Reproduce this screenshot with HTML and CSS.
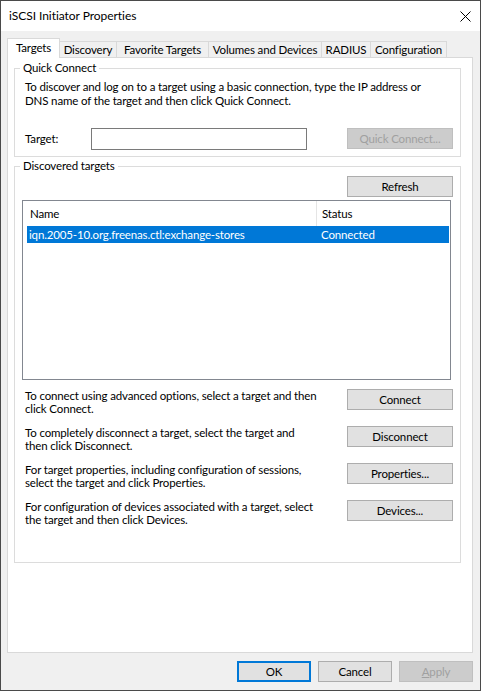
FILE: index.html
```html
<!DOCTYPE html>
<html>
<head>
<meta charset="utf-8">
<link rel="stylesheet" href="styles.css">
</head>
<body>
<div class="window">
  <div class="titlebar">
    <span class="title">iSCSI Initiator Properties</span>
    <svg class="close" width="11" height="11" viewBox="0 0 11 11"><path d="M0.5 0.5 L10.5 10.5 M10.5 0.5 L0.5 10.5" stroke="#000" stroke-width="1" fill="none"/></svg>
  </div>
  <div class="body">
    <div class="tabs">
      <div class="tab sel t1">Targets</div>
      <div class="tab t2">Discovery</div>
      <div class="tab t3">Favorite Targets</div>
      <div class="tab t4">Volumes and Devices</div>
      <div class="tab t5">RADIUS</div>
      <div class="tab t6">Configuration</div>
    </div>
    <div class="panel">
      <fieldset class="group qc">
        <legend>Quick Connect</legend>
        <div class="group-body">
          <p class="desc">To discover and log on to a target using a basic connection, type the IP address or<br>DNS name of the target and then click Quick Connect.</p>
          <div class="target-row">
            <span class="label">Target:</span>
            <div class="input"></div>
            <div class="btn disabled">Quick Connect...</div>
          </div>
        </div>
      </fieldset>
      <fieldset class="group dt">
        <legend>Discovered targets</legend>
        <div class="group-body">
          <div class="refresh-row"><div class="btn">Refresh</div></div>
          <div class="listview">
            <div class="lv-header">
              <div class="hcol name">Name</div>
              <div class="hcol status">Status</div>
            </div>
            <div class="lv-row selected">
              <div class="rcol name">iqn.2005-10.org.freenas.ctl:exchange-stores</div>
              <div class="rcol status">Connected</div>
            </div>
          </div>
          <div class="actions">
            <div class="action">
              <p>To connect using advanced options, select a target and then<br>click Connect.</p>
              <div class="btn">Connect</div>
            </div>
            <div class="action">
              <p>To completely disconnect a target, select the target and<br>then click Disconnect.</p>
              <div class="btn">Disconnect</div>
            </div>
            <div class="action">
              <p>For target properties, including configuration of sessions,<br>select the target and click Properties.</p>
              <div class="btn">Properties...</div>
            </div>
            <div class="action">
              <p>For configuration of devices associated with a target, select<br>the target and then click Devices.</p>
              <div class="btn">Devices...</div>
            </div>
          </div>
        </div>
      </fieldset>
    </div>
    <div class="footer">
      <div class="btn fbtn default">OK</div>
      <div class="btn fbtn">Cancel</div>
      <div class="btn fbtn disabled"><u>A</u>pply</div>
    </div>
  </div>
</div>
</body>
</html>
```
FILE: styles.css
```css
* { box-sizing: border-box; }
html, body { margin: 0; padding: 0; background: #ffffff; }
body {
  font-family: Lato, "Noto Sans", "DejaVu Sans", sans-serif;
  font-size: 11.5px;
  letter-spacing: -0.15px;
  color: #000;
}
.window {
  width: 481px;
  height: 691px;
  border: 1px solid #4a4a4a;
  background: #f0f0f0;
  display: flex;
  flex-direction: column;
}
.titlebar {
  height: 30px;
  background: #ffffff;
  display: flex;
  align-items: center;
  justify-content: space-between;
  padding: 0 9px 0 8px;
  flex: none;
}
.title { font-size: 12px; letter-spacing: -0.05px; line-height: 14px; }
.close { display: block; }
.body {
  flex: 1;
  display: flex;
  flex-direction: column;
  padding: 7px 7px 8px 6px;
}
.tabs {
  height: 19px;
  display: flex;
  align-items: flex-end;
  position: relative;
  z-index: 1;
}
.tab {
  height: 16px;
  border: 1px solid #d9d9d9;
  border-bottom: none;
  background: #f0f0f0;
  margin-right: -1px;
  display: flex;
  align-items: center;
  justify-content: center;
  padding-top: 1px;
  line-height: 14px;
  white-space: nowrap;
}
.tab.sel {
  height: 20px;
  margin-bottom: -1px;
  background: #ffffff;
  padding-top: 0;
  padding-bottom: 1px;
  position: relative;
  z-index: 2;
}
.t1 { width: 53px; }
.t2 { width: 58px; }
.t3 { width: 93px; }
.t4 { width: 114px; }
.t5 { width: 50px; }
.t6 { width: 77px; }
.panel {
  height: 596px;
  flex: none;
  background: #ffffff;
  border: 1px solid #d9d9d9;
  padding: 3px 0 0 6px;
}
.group {
  width: 447px;
  margin: 0;
  padding: 0;
  min-width: 0;
  border: 1px solid #dcdcdc;
}
.group legend {
  margin-left: 5px;
  padding: 0 3px;
  line-height: 14px;
}
.group.dt { margin-top: 2px; }
.group-body { padding: 0 7px 0 7px; }
.qc .group-body { padding-top: 5px; padding-bottom: 6px; }
.desc {
  margin: 0;
  padding-left: 3px;
  line-height: 14px;
  white-space: nowrap;
}
.target-row {
  margin-top: 20px;
  display: flex;
  align-items: center;
  height: 22px;
}
.label { width: 69px; padding-left: 3px; line-height: 14px; }
.input {
  width: 216px;
  height: 22px;
  border: 1px solid #7a7a7a;
  background: #fff;
}
.btn {
  width: 106px;
  height: 21px;
  border: 1px solid #adadad;
  background: #e1e1e1;
  display: flex;
  align-items: center;
  justify-content: center;
  line-height: 14px;
  white-space: nowrap;
  flex: none;
}
.target-row .btn { margin-left: auto; align-self: flex-start; }
.btn.disabled {
  background: #cccccc;
  border-color: #bfbfbf;
  color: #a0a0a0;
}
.dt .group-body { padding-top: 3px; padding-bottom: 36px; }
.refresh-row { display: flex; justify-content: flex-end; }
.listview {
  margin-top: 3px;
  width: 429px;
  height: 180px;
  border: 1px solid #828790;
  background: #fff;
}
.lv-header {
  height: 25px;
  display: flex;
}
.hcol { line-height: 26px; white-space: nowrap; }
.hcol.name { width: 294px; padding-left: 7px; border-right: 1px solid #e5e5e5; }
.hcol.status { padding-left: 5px; }
.lv-row {
  margin-left: 4px;
  height: 17px;
  display: flex;
  width: 422px;
}
.lv-row.selected { background: #0078d7; color: #fff; }
.rcol { line-height: 17px; white-space: nowrap; }
.rcol.name { width: 290px; padding-left: 2px; }
.rcol.status { padding-left: 4px; }
.actions {
  margin-top: 9px;
  display: flex;
  flex-direction: column;
  gap: 11px;
}
.action {
  display: flex;
  justify-content: space-between;
  align-items: flex-start;
  height: 26px;
}
.action p {
  margin: 0;
  padding-left: 3px;
  line-height: 13px;
  white-space: nowrap;
}
.footer {
  margin-top: 8px;
  display: flex;
  justify-content: flex-end;
  gap: 7px;
}
.fbtn { width: 74px; height: 21px; }
.fbtn.default { border: 2px solid #0078d7; }
.fbtn u { text-decoration: underline; }
```
